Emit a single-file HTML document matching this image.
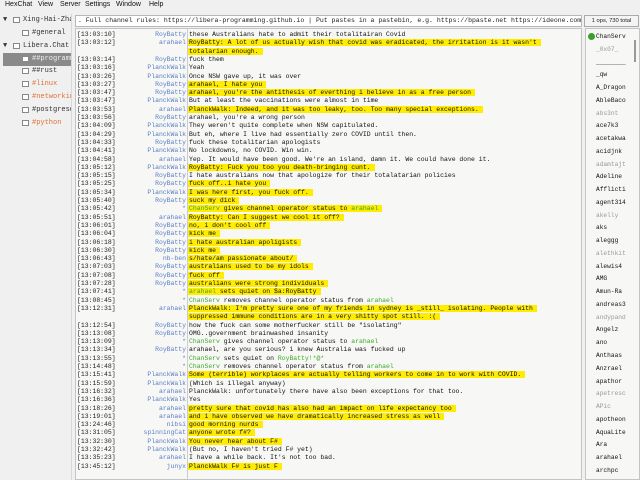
<!DOCTYPE html>
<html><head><meta charset="utf-8"><style>
*{margin:0;padding:0;box-sizing:border-box}
body{width:640px;height:480px;background:#f0f0f0;position:relative;overflow:hidden;font-family:"Liberation Mono",monospace;color:#222}
.menu{position:absolute;top:1px;font:7px "Liberation Sans",sans-serif;color:#111}
.menu span{position:absolute;white-space:nowrap}
.tree{position:absolute;left:0;top:14px;width:72px;height:466px;background:#f0f0f0;border-right:1px solid #d8d8d8;overflow:hidden}
.ti{position:absolute;font-size:7px;white-space:nowrap;height:13px;line-height:13px;color:#333}
.ico{position:absolute;width:7px;height:6px;border:1px solid #888;background:#fff;top:3.5px}
.topic{position:absolute;left:75px;top:15px;width:507px;height:12px;background:#fff;border:1px solid #b8b8b8;font-size:6.5px;line-height:10px;padding-left:2px;white-space:nowrap;overflow:hidden}
.ops{position:absolute;left:584px;top:15px;width:55px;height:12px;border:1px solid #aaa;background:#f4f4f4;font:5.8px "Liberation Sans",sans-serif;line-height:10px;text-align:center}
.chat{position:absolute;left:75px;top:28px;width:507px;height:452px;background:#f7f7f5;border:1px solid #c4c4c4;overflow:hidden}
.sep{position:absolute;left:111px;top:0;width:1px;height:452px;background:#ccc}
.row{position:absolute;left:0;height:8.3px;line-height:8.3px;font-size:6.45px;white-space:nowrap}
.t{position:absolute;left:1px;color:#222}
.n{position:absolute;right:0;width:110px;text-align:right;color:#5b7fc4;left:0}
.m{position:absolute;left:113px;color:#111}
.h{background:#ffec00;padding:0 4px 0 1px;margin-left:-1px}
.g{color:#3daa2a}
.ul{position:absolute;left:585px;top:28px;width:55px;height:452px;background:#f7f7f5;border:1px solid #c4c4c4}
.u{position:absolute;left:10px;font-size:6.2px;white-space:nowrap;color:#111}
.aw{color:#999}
</style></head><body>
<div class="menu">
<span style="left:5px">HexChat</span><span style="left:38px">View</span><span style="left:60px">Server</span><span style="left:85px">Settings</span><span style="left:116px">Window</span><span style="left:149px">Help</span>
</div>
<div class="tree">
<div class="ti" style="left:3px;top:0">▼</div><div class="ico" style="left:13px;top:3px"></div><div class="ti" style="left:23px;top:0">Xing-Hai-Zha</div>
<div class="ico" style="left:22px;top:16px"></div><div class="ti" style="left:32px;top:13px">#general</div>
<div class="ti" style="left:3px;top:26px">▼</div><div class="ico" style="left:13px;top:29px"></div><div class="ti" style="left:23px;top:26px">Libera.Chat</div>
<div style="position:absolute;left:3px;top:39px;width:69px;height:13px;background:#8a8a8a"></div>
<div class="ico" style="left:22px;top:42px"></div><div class="ti" style="left:32px;top:39px;color:#eee">##programm</div>
<div class="ico" style="left:22px;top:54px"></div><div class="ti" style="left:32px;top:51px">##rust</div>
<div class="ico" style="left:22px;top:67px"></div><div class="ti" style="left:32px;top:64px;color:#e07030">#linux</div>
<div class="ico" style="left:22px;top:80px"></div><div class="ti" style="left:32px;top:77px;color:#e07030">#networkin</div>
<div class="ico" style="left:22px;top:93px"></div><div class="ti" style="left:32px;top:90px">#postgresq</div>
<div class="ico" style="left:22px;top:106px"></div><div class="ti" style="left:32px;top:103px;color:#e07030">#python</div>
</div>
<div class="topic">. Full channel rules: https://libera-programming.github.io | Put pastes in a pastebin, e.g. https://bpaste.net https://ideone.com</div>
<div class="ops">1 ops, 730 total</div>
<div class="chat"><div class="sep"></div>
<div id="rows"></div>
</div>
<div class="ul">
<div style="position:absolute;left:2px;top:4px;width:7px;height:7px;border-radius:50%;background:#3aa02a"></div>
<div style="position:absolute;right:1px;top:2px;width:7px;height:448px"><div style="position:absolute;left:3px;top:9px;width:2px;height:22px;background:#999"></div></div>
<div id="users"></div>
</div>
<script>
var L=[
["13:03:10","RoyBatty"," these Australians hate to admit their totalitairan Covid",0],
["13:03:12","arahael","RoyBatty: A lot of us actually wish that covid was eradicated, the irritation is it wasn't ",1],
["","","totalarian enough.",1],
["13:03:14","RoyBatty","fuck them",0],
["13:03:16","PlanckWalk","Yeah",0],
["13:03:26","PlanckWalk","Once NSW gave up, it was over",0],
["13:03:27","RoyBatty","arahael, I hate you",1],
["13:03:47","RoyBatty","arahael, you're the antithesis of everthing i believe in as a free person",1],
["13:03:47","PlanckWalk","But at least the vaccinations were almost in time",0],
["13:03:53","arahael","PlanckWalk: Indeed, and it was too leaky, too.  Too many special exceptions.",1],
["13:03:56","RoyBatty","arahael, you're a wrong person",0],
["13:04:09","PlanckWalk","They weren't quite complete when NSW capitulated.",0],
["13:04:29","PlanckWalk","But eh, where I live had essentially zero COVID until then.",0],
["13:04:33","RoyBatty","fuck these totalitarian apologists",0],
["13:04:41","PlanckWalk","No lockdowns, no COVID.  Win win.",0],
["13:04:58","arahael","Yep.  It would have been good.  We're an island, damn it. We could have done it.",0],
["13:05:12","PlanckWalk","RoyBatty: Fuck you too you death-bringing cunt.",1],
["13:05:15","RoyBatty","I hate australians now that apologize for their totalatarian policies",0],
["13:05:25","RoyBatty","fuck off..i hate you",1],
["13:05:34","PlanckWalk","I was here first, you fuck off.",1],
["13:05:40","RoyBatty","suck my dick",1],
["13:05:42","*","<span class=g>ChanServ</span> gives channel operator status to <span class=g>arahael</span>",1],
["13:05:51","arahael","RoyBatty: Can I suggest we cool it off?",1],
["13:06:01","RoyBatty","no, i don't cool off",1],
["13:06:04","RoyBatty","kick me",1],
["13:06:18","RoyBatty","i hate australian apoligists",1],
["13:06:30","RoyBatty","kick me",1],
["13:06:43","nb-ben","s/hate/am passionate about/",1],
["13:07:03","RoyBatty","australians used to be my idols",1],
["13:07:08","RoyBatty","fuck off",1],
["13:07:28","RoyBatty","australians were strong individuals",1],
["13:07:41","*","<span class=g>arahael</span> sets quiet on $a:RoyBatty",1],
["13:08:45","*","<span class=g>ChanServ</span> removes channel operator status from <span class=g>arahael</span>",0],
["13:12:31","arahael","PlanckWalk: I'm pretty sure one of my friends in sydney is _still_ isolating.  People with",1],
["","","suppressed immune conditions are in a very shitty spot still. :(",1],
["13:12:54","RoyBatty","how the fuck can some motherfucker still be \"isolating\"",0],
["13:13:08","RoyBatty","OMG..government brainwashed insanity",0],
["13:13:09","*","<span class=g>ChanServ</span> gives channel operator status to <span class=g>arahael</span>",0],
["13:13:34","RoyBatty","arahael, are you serious? i knew Australia was fucked up",0],
["13:13:55","*","<span class=g>ChanServ</span> sets quiet on <span class=g>RoyBatty!*@*</span>",0],
["13:14:48","*","<span class=g>ChanServ</span> removes channel operator status from <span class=g>arahael</span>",0],
["13:15:41","PlanckWalk","Some (terrible) workplaces are actually telling workers to come in to work with COVID.",1],
["13:15:59","PlanckWalk","(Which is illegal anyway)",0],
["13:16:32","arahael","PlanckWalk: unfortunately there have also been exceptions for that too.",0],
["13:16:36","PlanckWalk","Yes",0],
["13:18:26","arahael","pretty sure that covid has also had an impact on life expectancy too",1],
["13:19:01","arahael","and i have observed we have dramatically increased stress as well",1],
["13:24:46","nibsi","good morning nurds",1],
["13:31:05","spinningCat","anyone wrote f#?",1],
["13:32:30","PlanckWalk","You never hear about F#",1],
["13:32:42","PlanckWalk","(But no, I haven't tried F# yet)",0],
["13:35:23","arahael","I have a while back.  It's not too bad.",0],
["13:45:12","junyx","PlanckWalk F# is just F",1]];
var h="";
L.forEach(function(r,i){var top=2+i*8.3;
h+='<div class="row" style="top:'+top+'px;width:505px">'+(r[0]?'<span class="t">['+r[0]+']</span>':'')+'<span class="n">'+r[1]+'</span><span class="m">'+(r[3]?'<span class="h">'+r[2]+'</span>':r[2])+'</span></div>';});
document.getElementById('rows').innerHTML=h;
var U=["ChanServ","_0x07_","________","_qw","A_Dragon","AbleBaco","abs3nt","ace7k3","acetakwa","acidjnk","adamtajt","Adeline","Afflicti","agent314","akelly","aks","aleggg","alethkit","alewis4","AMG","Amun-Ra","andreas3","andypand","Angelz","ano","Anthaas","Anzrael","apathor","apetresc","APic","apotheon","AquaLite","Ara","arahael","archpc"];
var aw={"_0x07_":1,"abs3nt":1,"adamtajt":1,"akelly":1,"alethkit":1,"andypand":1,"apetresc":1,"APic":1};
var s="";U.forEach(function(u,i){s+='<div class="u'+(aw[u]?' aw':'')+'" style="top:'+(4+i*12.76)+'px">'+u+'</div>';});
document.getElementById('users').innerHTML=s;
</script>
</body></html>
